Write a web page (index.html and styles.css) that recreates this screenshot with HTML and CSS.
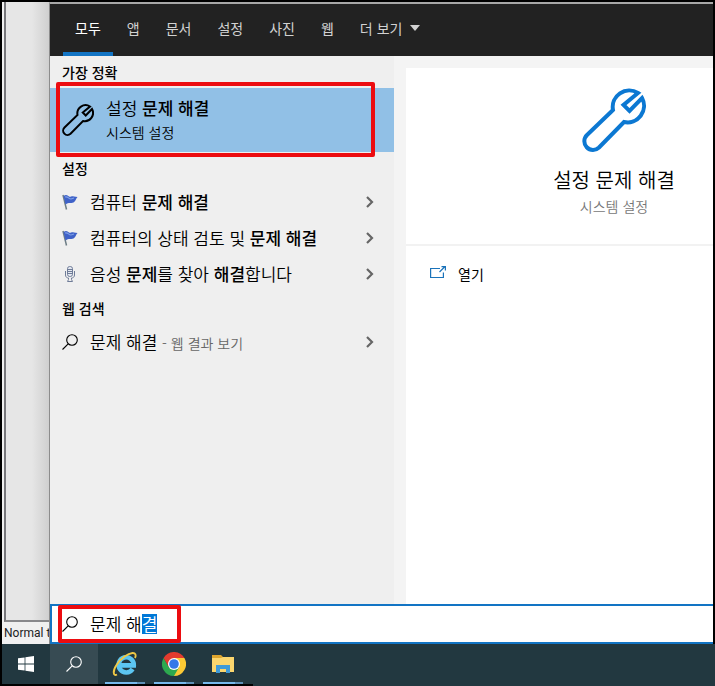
FILE: index.html
```html
<!DOCTYPE html>
<html lang="ko">
<head>
    <meta charset="UTF-8">
    <meta name="viewport" content="width=device-width, initial-scale=1.0">
    <title>문제 해결 - 검색</title>
    <link rel="stylesheet" href="styles.css">
</head>
<body>
    <svg class="sprite" aria-hidden="true">
        <symbol id="wrench" viewBox="0 0 64 64">
            <path d="M56 5 A16.500 16.500 0 0 0 31 22 L5 47 A8.500 8.500 0 0 0 17 59.500 L42 34 A16.500 16.500 0 0 0 60 10 L47.500 23 L41.500 17 Z" fill="none" stroke="currentColor" stroke-width="4"/>
        </symbol>
        <symbol id="magnifier" viewBox="0 0 16 16">
            <circle cx="10" cy="6" r="5.3" fill="none" stroke="currentColor" stroke-width="1.1"/>
            <path d="M6.2 9.8 L0.5 15.5" stroke="currentColor" stroke-width="1.1"/>
        </symbol>
        <symbol id="chevron" viewBox="0 0 8 12">
            <path d="M1 1 L6 6 L1 11" fill="none" stroke="currentColor" stroke-width="2.2"/>
        </symbol>
        <symbol id="flag" viewBox="0 0 16 16">
            <path d="M1 1 L4.5 15.5" stroke="#6d7d85" stroke-width="1.5"/>
            <path d="M1.5 2 C4 0 5.5 1 7 2.5 C8.5 3.5 9.5 1.5 12 2.5 L15.5 3 C13.5 5 14 7 11.5 8.5 C8.5 9.5 7 8 3.5 10.5 Z" fill="#3f62c8"/>
            <path d="M3 3 C6 2 6.5 5 9 5 L12 4" fill="none" stroke="#7fa0e6" stroke-width="1.2"/>
        </symbol>
    </svg>

    <div class="screen">
        <main class="desktop">
            <div class="editor">
                <div class="editor-page"></div>
                <div class="editor-status">Normal text</div>
            </div>

            <div class="search-window">
                <nav class="tabs">
                    <button type="button" class="tab active">모두</button>
                    <button type="button" class="tab">앱</button>
                    <button type="button" class="tab">문서</button>
                    <button type="button" class="tab">설정</button>
                    <button type="button" class="tab">사진</button>
                    <button type="button" class="tab">웹</button>
                    <button type="button" class="tab">더 보기 <span class="caret"></span></button>
                </nav>

                <div class="panes">
                    <section class="results">
                        <h2>가장 정확</h2>
                        <a href="#" class="best-match marked">
                            <svg class="best-icon"><use href="#wrench"/></svg>
                            <span class="best-text">
                                <span class="best-title">설정 <b>문제 해결</b></span>
                                <span class="best-type">시스템 설정</span>
                            </span>
                        </a>

                        <h2>설정</h2>
                        <a href="#" class="result">
                            <svg class="icon"><use href="#flag"/></svg>
                            <span class="label">컴퓨터 <b>문제 해결</b></span>
                            <svg class="chevron"><use href="#chevron"/></svg>
                        </a>
                        <a href="#" class="result">
                            <svg class="icon"><use href="#flag"/></svg>
                            <span class="label">컴퓨터의 상태 검토 및 <b>문제 해결</b></span>
                            <svg class="chevron"><use href="#chevron"/></svg>
                        </a>
                        <a href="#" class="result">
                            <svg class="icon" viewBox="0 0 16 16" fill="none" stroke="#6f7c98">
                                <rect x="5.5" y="0.5" width="5" height="10" rx="2.2" fill="#e4e8f0"/>
                                <path d="M5.5 3.5h5M5.5 5.5h5M5.5 7.5h5"/>
                                <path d="M3.5 5v4c0 2 1.5 3 3 3v1.5l-1 2h5l-1-2V12c1.5 0 3-1 3-3V5"/>
                            </svg>
                            <span class="label">음성 <b>문제</b>를 찾아 <b>해결</b>합니다</span>
                            <svg class="chevron"><use href="#chevron"/></svg>
                        </a>

                        <h2>웹 검색</h2>
                        <a href="#" class="result">
                            <svg class="icon"><use href="#magnifier"/></svg>
                            <span class="label">문제 해결 <small>- 웹 결과 보기</small></span>
                            <svg class="chevron"><use href="#chevron"/></svg>
                        </a>
                    </section>

                    <section class="preview">
                        <div class="preview-card">
                            <svg class="preview-icon"><use href="#wrench"/></svg>
                            <h1>설정 문제 해결</h1>
                            <p>시스템 설정</p>
                        </div>
                        <div class="preview-actions">
                            <a href="#" class="action">
                                <svg class="icon" viewBox="0 0 16 16" fill="none" stroke="currentColor" stroke-width="1.2">
                                    <path d="M10 2.5H0.6v9h12.8V6.5"/>
                                    <path d="M9.5 6l5-5M11.500 0.6h3.900v3.900"/>
                                </svg>
                                <span>열기</span>
                            </a>
                        </div>
                    </section>
                </div>

                <form class="search-bar">
                    <label class="search-field marked" for="query">
                        <svg class="icon"><use href="#magnifier"/></svg>
                        <input type="text" id="query" value="문제 해결" aria-label="검색" autocomplete="off" spellcheck="false">
                    </label>
                </form>
            </div>
        </main>

        <footer class="taskbar">
            <button type="button" class="task" aria-label="시작">
                <svg width="16" height="16" viewBox="0 0 16 16" fill="#fff">
                    <path d="M0 2.3L6.6 1.4V7.5H0zM7.4 1.3L16 0V7.5H7.4zM0 8.4H6.6V14.6L0 13.7zM7.4 8.4H16V16L7.4 14.8z"/>
                </svg>
            </button>
            <button type="button" class="task task-search" aria-label="검색">
                <svg class="icon"><use href="#magnifier"/></svg>
            </button>
            <div class="apps">
                <button type="button" class="task running" aria-label="Internet Explorer">
                    <svg width="26" height="26" viewBox="0 0 26 26" fill="none">
                        <path d="M20.6 18A7.6 7.6 0 1 1 21.800 14.400H8" stroke="#5cc6f2" stroke-width="4.6"/>
                        <path d="M5 23.500C1 25.500 0.500 20 4.500 14C9 7 16 2.500 20.500 2C23.500 1.800 24.500 4 23 7" stroke="#f0c945" stroke-width="1.900"/>
                    </svg>
                </button>
                <button type="button" class="task running" aria-label="Chrome">
                    <svg width="24" height="24" viewBox="0 0 24 24">
                        <path d="M12 12V6H22.4A12 12 0 0 1 12 24z" fill="#fcc934"/>
                        <path d="M12 12L17.2 15L12 24A12 12 0 0 1 1.6 6L6.8 15z" fill="#2da94f"/>
                        <path d="M1.6 6A12 12 0 0 1 22.4 6H12L6.8 15z" fill="#e33b2e"/>
                        <circle cx="12" cy="12" r="6" fill="#fff"/>
                        <circle cx="12" cy="12" r="4.8" fill="#3478e8"/>
                    </svg>
                </button>
                <button type="button" class="task running" aria-label="파일 탐색기">
                    <svg width="22" height="18" viewBox="0 0 22 18">
                        <path d="M0 0H9L11 2H22V17H0z" fill="#dda52e"/>
                        <path d="M0 3H9L11 2H22V17H0z" fill="#fbd66e"/>
                        <path d="M4 18V10H18V18H14V14H8V18z" fill="#3f9ad8"/>
                    </svg>
                </button>
            </div>
        </footer>
    </div>

    <script>
        // keep the auto-completed last syllable selected
        const query = document.getElementById('query');
        query.focus();
        query.setSelectionRange(4, 5);
    </script>
</body>
</html>
```
FILE: styles.css
```css
*,
*::after {
    margin: 0;
    padding: 0;
    box-sizing: border-box;
}

body {
    background: #000;
    color: #000;
    font-family: "Noto Sans CJK KR", "Noto Sans", sans-serif;
    font-size: 14px;
    line-height: 20px;
}

a {
    color: inherit;
    text-decoration: none;
}

button {
    background: none;
    border: none;
    font: inherit;
    color: inherit;
    cursor: pointer;
}

.sprite {
    position: absolute;
    width: 0;
    height: 0;
}

.icon {
    width: 16px;
    height: 16px;
    flex-shrink: 0;
}

.screen {
    display: flex;
    flex-direction: column;
    height: 100vh;
    padding: 2px 0 0 2px;
    overflow: hidden;
}

.desktop {
    display: flex;
    flex: 1;
    min-height: 0;
    border-right: 2px solid #000;
}

/* window behind the search panel */
.editor {
    display: flex;
    flex-direction: column;
    width: 47px;
    flex-shrink: 0;
    background: #f0f0f0;
}

.editor-page {
    flex: 1;
    margin-left: 2px;
    border-left: 2px solid #77777b;
    border-bottom: 2px solid #88888b;
    background: linear-gradient(to right, #e6e6e6 60%, #cfcfcf);
}

.editor-status {
    height: 22px;
    padding-left: 2px;
    font-family: Roboto, sans-serif;
    font-size: 12px;
    line-height: 22px;
    color: #222;
    white-space: nowrap;
    overflow: hidden;
}

.search-window {
    display: flex;
    flex-direction: column;
    flex: 1;
    min-width: 0;
    overflow: hidden;
    border-top: 2px solid #a8a8a8;
    border-left: 1px solid #8c8c8c;
}

.tabs {
    display: flex;
    flex-shrink: 0;
    gap: 2px;
    height: 52px;
    padding-left: 13px;
    background: #222;
    color: #d2d2d2;
}

.tab {
    display: flex;
    align-items: center;
    padding: 0 12px;
    border-bottom: 4px solid transparent;
    white-space: nowrap;
}

.tab.active {
    color: #fff;
    border-bottom-color: #1274c4;
}

.caret {
    margin-left: 8px;
    border: 5px solid transparent;
    border-top: 6px solid #d2d2d2;
    border-bottom: none;
}

.panes {
    display: flex;
    flex: 1;
    min-height: 0;
    background: #f4f4f4;
}

.results {
    width: 344px;
    flex-shrink: 0;
    background: #efefef;
}

.results h2 {
    padding-left: 12px;
    font-size: 14px;
    font-weight: 500;
    line-height: 32px;
}

.best-match {
    position: relative;
    display: flex;
    align-items: center;
    gap: 12px;
    height: 64px;
    padding-left: 12px;
    background: #91c0e6;
}

.best-icon {
    width: 32px;
    height: 32px;
}

.best-text {
    display: flex;
    flex-direction: column;
    gap: 4px;
}

.best-title,
.label {
    font-size: 17px;
    font-weight: 350;
}

.best-type,
.label small {
    font-size: 14px;
    font-weight: 350;
}

b {
    font-weight: 500;
}

.result {
    display: flex;
    align-items: center;
    gap: 12px;
    height: 36px;
    padding: 0 20px 0 12px;
}

.label {
    flex: 1;
    white-space: nowrap;
}

.label small {
    color: #666;
}

.chevron {
    width: 8px;
    height: 12px;
    color: #666;
}

.preview {
    display: flex;
    flex-direction: column;
    flex: 1 0 416px;
    margin: 12px 0 0 12px;
    background: #fff;
}

.preview-card {
    display: flex;
    flex-direction: column;
    align-items: center;
    padding: 20px 0 28px;
    border-bottom: 2px solid #f2f2f2;
}

.preview-icon {
    width: 64px;
    height: 64px;
    color: #0c78d2;
}

.preview-card h1 {
    margin-top: 14px;
    font-size: 20px;
    font-weight: 350;
    line-height: 28px;
}

.preview-card p {
    margin-top: 2px;
    color: #777;
    font-weight: 350;
}

.preview-actions {
    padding: 18px 24px;
}

.action {
    display: flex;
    align-items: center;
    gap: 12px;
}

.action .icon {
    color: #1b73ba;
}

.search-bar {
    flex-shrink: 0;
    height: 40px;
    padding: 0 10px;
    background: #fff;
    border: 2px solid #1274c4;
    border-right: none;
}

.search-field {
    position: relative;
    display: flex;
    align-items: center;
    gap: 12px;
    height: 36px;
}

.search-field input {
    flex: 1;
    min-width: 0;
    border: none;
    outline: none;
    background: none;
    font: inherit;
    font-size: 17px;
    font-weight: 350;
}

.search-field input::selection {
    background: #0078d7;
    color: #fff;
}

/* red marker frames */
.marked::after {
    content: "";
    position: absolute;
    border: 4px solid #ec0c10;
    border-radius: 2px;
    pointer-events: none;
}

.best-match.marked::after {
    inset: -6px 19px -5px 6px;
}

.search-field.marked::after {
    top: -1px;
    bottom: -1px;
    left: -4px;
    width: 123px;
}

.taskbar {
    display: flex;
    flex-shrink: 0;
    height: 42px;
    padding-bottom: 2px;
    background: linear-gradient(#000, #000) no-repeat left bottom / 251px 2px, #223840;
}

.task {
    display: flex;
    align-items: center;
    justify-content: center;
    width: 48px;
    color: #fff;
}

.task-search {
    background: #374b53;
}

.apps {
    display: flex;
    gap: 9px;
    padding-left: 7px;
}

.running {
    width: 40px;
    border-top: 2px solid transparent;
    border-bottom: 2px solid;
    border-image: linear-gradient(to right, #76b9ed 78%, #5c8fb6 78%) 2;
    border-image-width: 0 0 2px;
}
```
